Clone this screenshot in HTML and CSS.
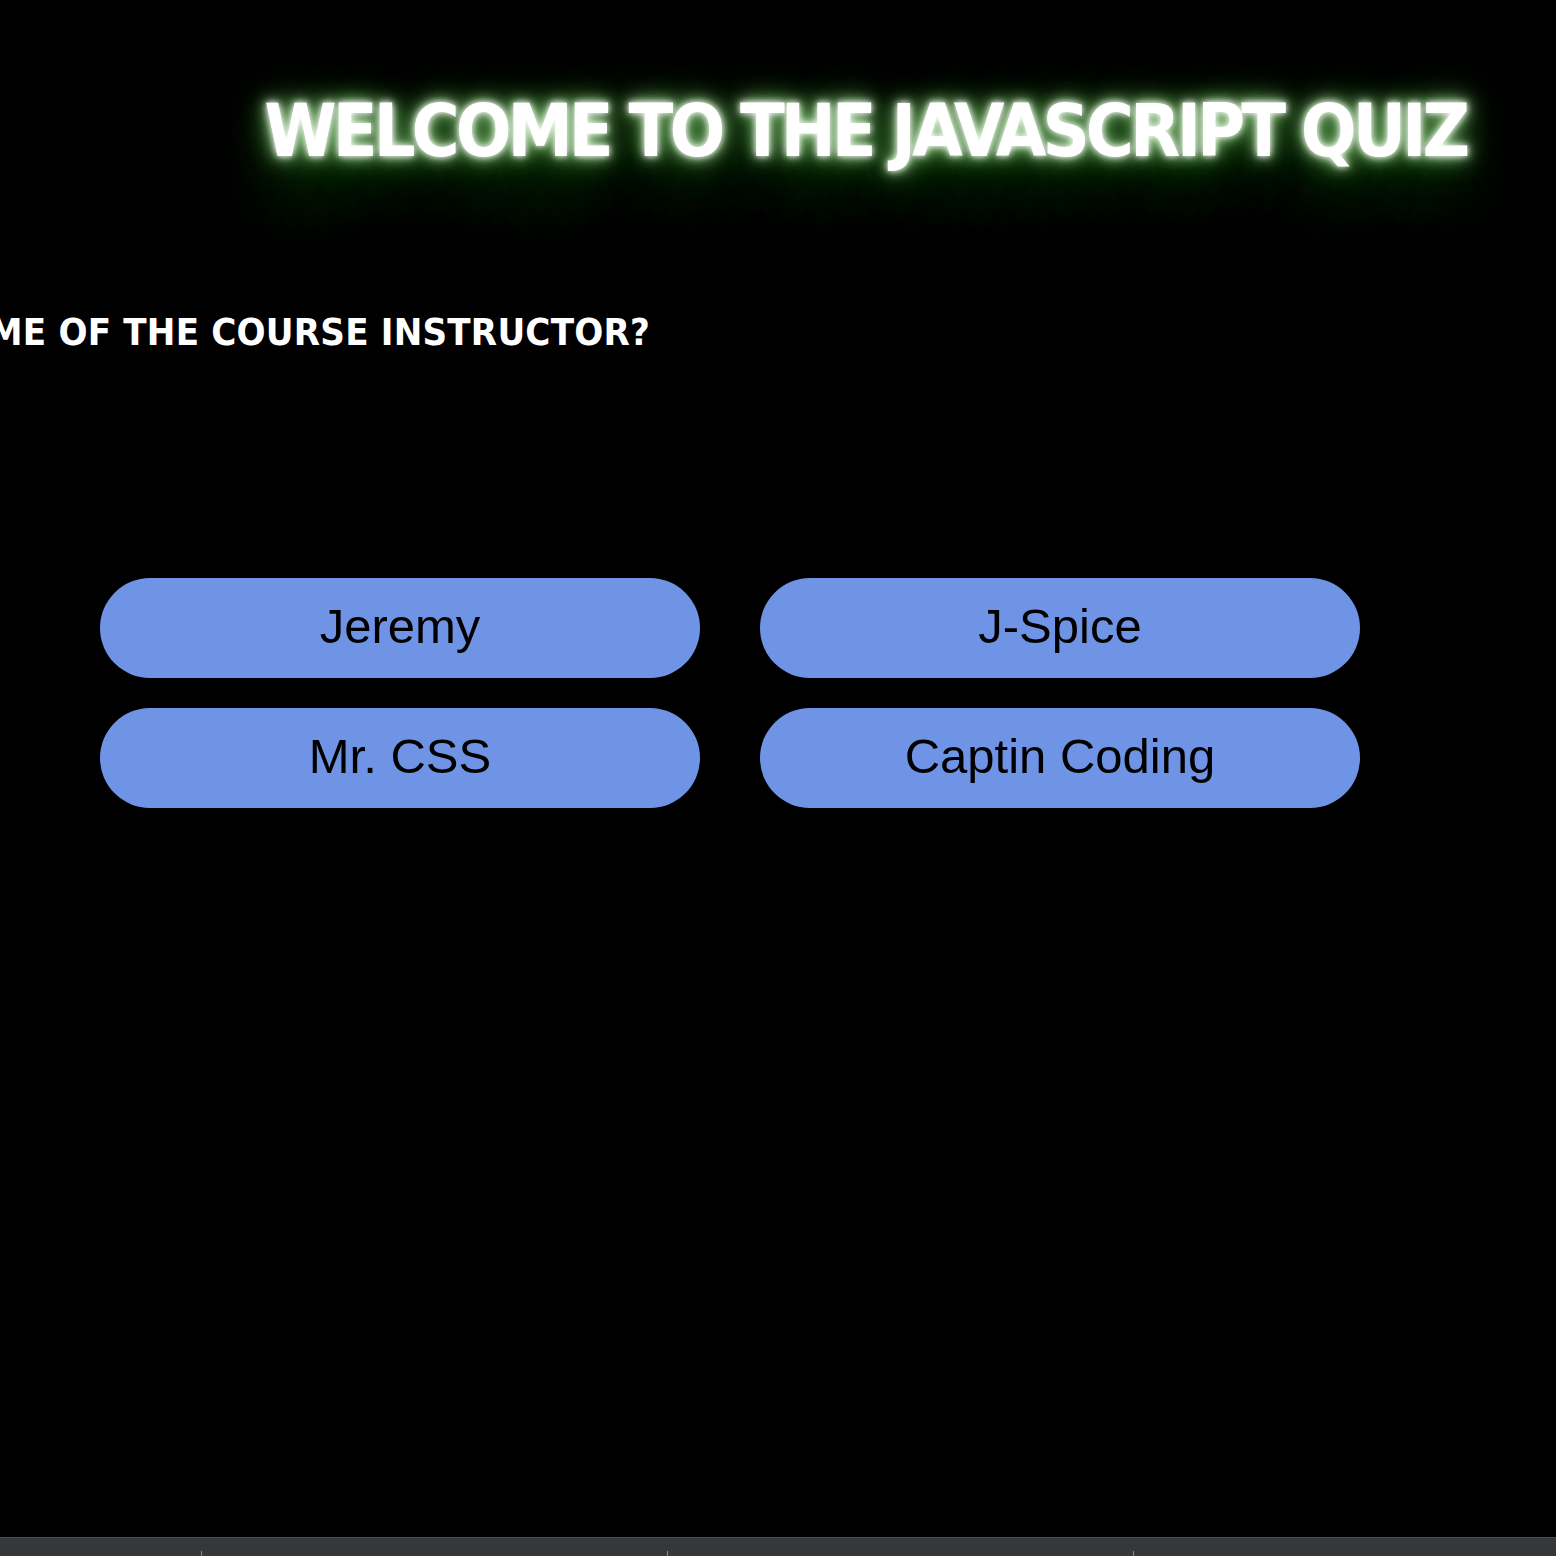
FILE: index.html
```html
<!DOCTYPE html>
<html lang="en">
<head>
<meta charset="utf-8">
<title>JavaScript Quiz</title>
<link rel="stylesheet" href="styles.css">
</head>
<body>
<main class="page">
  <header class="hero">
    <h1 class="title">WELCOME TO THE JAVASCRIPT QUIZ</h1>
  </header>
  <section class="question-row">
    <h2 class="question">WHAT IS THE NAME OF THE COURSE INSTRUCTOR?</h2>
  </section>
  <section class="answers">
    <button class="answer">Jeremy</button>
    <button class="answer">J-Spice</button>
    <button class="answer">Mr. CSS</button>
    <button class="answer">Captin Coding</button>
  </section>
</main>
<footer class="dock">
  <span class="tick"></span>
  <span class="tick"></span>
  <span class="tick"></span>
</footer>
</body>
</html>
```

FILE: styles.css
```css
html, body {
  margin: 0;
  padding: 0;
  background: #000;
  height: 100%;
}
body {
  display: flex;
  flex-direction: column;
  min-height: 1556px;
  overflow: hidden;
}
.page {
  flex: 1;
  display: flex;
  flex-direction: column;
}
.hero {
  display: flex;
  justify-content: flex-end;
  padding: 91px 90px 0 0;
  height: 212px;
  box-sizing: border-box;
}
.title {
  margin: 0;
  font-family: "DejaVu Sans Condensed", "DejaVu Sans", sans-serif;
  font-weight: bold;
  font-size: 73px;
  line-height: 80px;
  letter-spacing: -4px;
  color: #fff;
  white-space: nowrap;
  text-shadow:
    0 0 6px #fff,
    0 0 14px #c6e9bc,
    0 0 26px #5aa84b,
    0 0 44px #2a6e21,
    0 30px 60px #10390d,
    0 60px 80px #0a2808,
    0 90px 90px #061a05;
}
.question-row {
  display: flex;
  justify-content: flex-end;
  width: 650px;
  margin-top: 98px;
}
.question {
  margin: 0;
  font-family: "DejaVu Sans Condensed", "DejaVu Sans", sans-serif;
  font-weight: bold;
  font-size: 38px;
  line-height: 44px;
  letter-spacing: 0.2px;
  color: #fff;
  white-space: nowrap;
  flex-shrink: 0;
}
.answers {
  display: grid;
  grid-template-columns: 600px 600px;
  column-gap: 60px;
  row-gap: 30px;
  margin: 224px 0 0 100px;
}
.answer {
  height: 100px;
  border: none;
  border-radius: 50px;
  background: #6f94e5;
  color: #000;
  font-family: "Liberation Sans", Arial, sans-serif;
  font-size: 49px;
  padding: 0 0 4px;
}
.dock {
  height: 18px;
  background: #35373b;
  border-top: 1px solid #4a4c50;
  display: flex;
  align-items: flex-end;
  padding-left: 201px;
  gap: 465px;
}
.tick {
  width: 1px;
  height: 5px;
  background: #8a8c90;
}
```
